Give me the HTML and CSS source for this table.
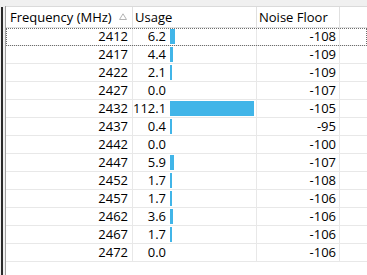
FILE: index.html
```html
<!DOCTYPE html>
<html>
<head>
<meta charset="utf-8">
<link rel="stylesheet" href="styles.css">
</head>
<body>
<div class="frame">
  <div class="edge"><div class="edge-dark"></div><div class="edge-gap"></div><div class="edge-line"></div></div>
  <div class="list">
    <div class="header">
      <div class="hcell first">Frequency (MHz)<svg class="sort" width="8" height="7" viewBox="0 0 8 7"><path d="M0.5 6.5 L4 0.8 L7.5 6.5 Z" fill="none" stroke="#b4b4b4" stroke-width="1"/></svg></div>
      <div class="hcell">Usage</div>
      <div class="hcell">Noise Floor</div>
      <div class="hcell last"></div>
    </div>
    <div class="row focus"><div class="c freq">2412</div><div class="c usage"><span class="val">6.2</span><span class="bar" style="width:5px"></span></div><div class="c noise">-108</div><div class="c rest"></div></div>
    <div class="row"><div class="c freq">2417</div><div class="c usage"><span class="val">4.4</span><span class="bar" style="width:3px"></span></div><div class="c noise">-109</div><div class="c rest"></div></div>
    <div class="row"><div class="c freq">2422</div><div class="c usage"><span class="val">2.1</span><span class="bar" style="width:2px"></span></div><div class="c noise">-109</div><div class="c rest"></div></div>
    <div class="row"><div class="c freq">2427</div><div class="c usage"><span class="val">0.0</span></div><div class="c noise">-107</div><div class="c rest"></div></div>
    <div class="row"><div class="c freq">2432</div><div class="c usage"><span class="val">112.1</span><span class="bar" style="width:84px"></span></div><div class="c noise">-105</div><div class="c rest"></div></div>
    <div class="row"><div class="c freq">2437</div><div class="c usage"><span class="val">0.4</span><span class="bar" style="width:2px"></span></div><div class="c noise">-95</div><div class="c rest"></div></div>
    <div class="row"><div class="c freq">2442</div><div class="c usage"><span class="val">0.0</span></div><div class="c noise">-100</div><div class="c rest"></div></div>
    <div class="row"><div class="c freq">2447</div><div class="c usage"><span class="val">5.9</span><span class="bar" style="width:4px"></span></div><div class="c noise">-107</div><div class="c rest"></div></div>
    <div class="row"><div class="c freq">2452</div><div class="c usage"><span class="val">1.7</span><span class="bar" style="width:2px"></span></div><div class="c noise">-108</div><div class="c rest"></div></div>
    <div class="row"><div class="c freq">2457</div><div class="c usage"><span class="val">1.7</span><span class="bar" style="width:2px"></span></div><div class="c noise">-106</div><div class="c rest"></div></div>
    <div class="row"><div class="c freq">2462</div><div class="c usage"><span class="val">3.6</span><span class="bar" style="width:3px"></span></div><div class="c noise">-106</div><div class="c rest"></div></div>
    <div class="row"><div class="c freq">2467</div><div class="c usage"><span class="val">1.7</span><span class="bar" style="width:2px"></span></div><div class="c noise">-106</div><div class="c rest"></div></div>
    <div class="row"><div class="c freq">2472</div><div class="c usage"><span class="val">0.0</span></div><div class="c noise">-106</div><div class="c rest"></div></div>
  </div>
</div>
</body>
</html>
```
FILE: styles.css
```css
html, body {
  margin: 0;
  padding: 0;
}
body {
  width: 367px;
  height: 275px;
  overflow: hidden;
  background: #f0f0f0;
  font-family: "Open Sans", "Noto Sans", "Liberation Sans", sans-serif;
  font-size: 13px;
  color: #000;
}
.frame {
  display: flex;
  height: 275px;
}
.edge {
  display: flex;
  width: 6px;
  flex: none;
}
.edge-dark {
  width: 2px;
  margin-left: 1px;
  margin-top: 7px;
  background: #2a2a2a;
}
.edge-gap {
  width: 2px;
}
.edge-line {
  width: 1px;
  margin-top: 6px;
  background: #a0a0a0;
}
.list {
  flex: 1;
  margin-top: 6px;
  border-top: 1px solid #dadada;
  background: #fff;
  display: flex;
  flex-direction: column;
}
.header, .row {
  display: grid;
  grid-template-columns: 127px 124px 83px 1fr;
}
.header {
  height: 20px;
  border-bottom: 1px solid #e0e0e0;
  line-height: 20px;
}
.hcell {
  border-right: 1px solid #e0e0e0;
  padding-left: 2px;
  white-space: nowrap;
  display: flex;
  align-items: center;
}
.hcell.first {
  padding-left: 4px;
}
.hcell.last {
  border-right: none;
}
.sort {
  margin-left: 7px;
  margin-top: -1px;
}
.row {
  height: 17px;
  border-bottom: 1px solid #e8e8e8;
  line-height: 17px;
}
.row.focus {
  outline: 1px dotted #6e6e6e;
  outline-offset: -1px;
}
.c {
  border-right: 1px solid #e8e8e8;
  white-space: nowrap;
}
.c.rest {
  border-right: none;
}
.freq {
  text-align: right;
  padding-right: 4px;
}
.noise {
  text-align: right;
  padding-right: 3px;
}
.usage {
  display: flex;
  align-items: flex-start;
}
.val {
  width: 33px;
  flex: none;
  text-align: right;
}
.bar {
  height: 15px;
  margin-top: 1px;
  margin-left: 4px;
  background: #41b5e8;
  flex: none;
}
```
